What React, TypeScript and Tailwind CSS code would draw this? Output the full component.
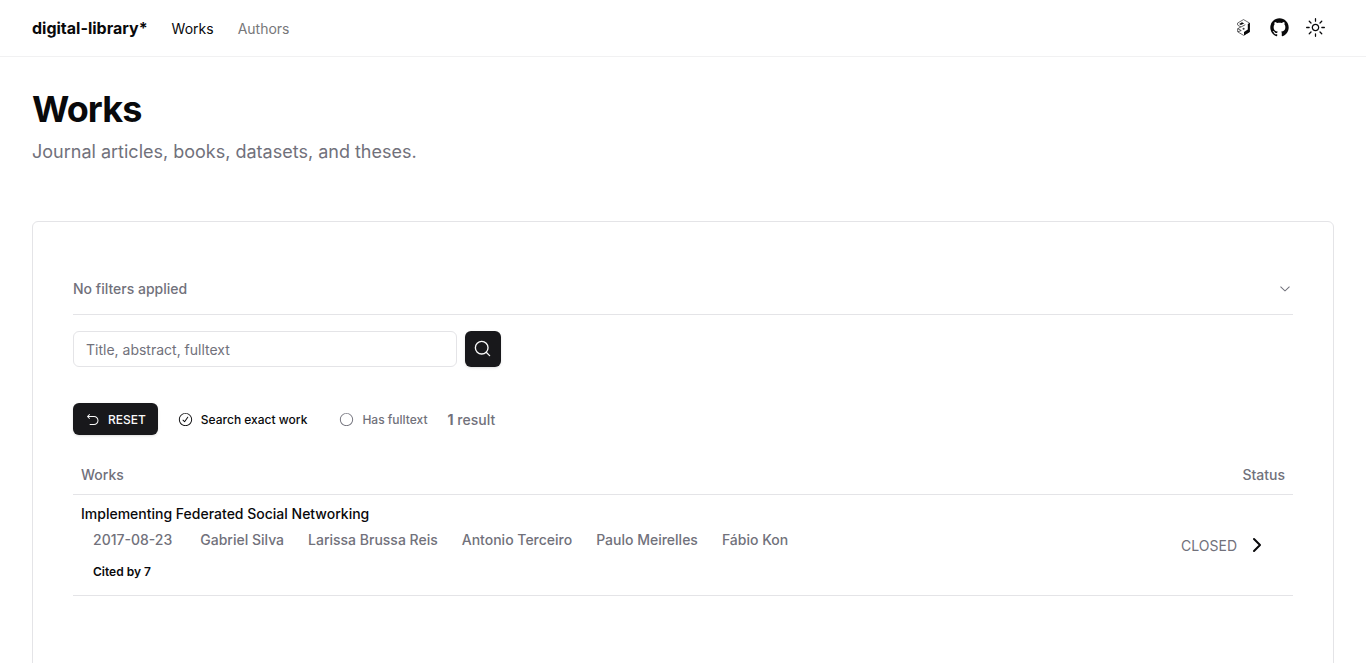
import type { ReactNode } from "react";
import {
  RxCheckCircled,
  RxChevronDown,
  RxCircle,
  RxGithubLogo,
  RxReset,
  RxSun,
} from "react-icons/rx";
import { ChevronRight, Search } from "lucide-react";

const authors = ["Gabriel Silva", "Larissa Brussa Reis", "Antonio Terceiro", "Paulo Meirelles", "Fábio Kon"];

function HexLogo() {
  return (
    <svg viewBox="0 0 13 17" className="h-[17px] w-[13px]" fill="none" stroke="currentColor">
      <path d="M.6 6V4L6.5.6l6 3.4v8.7l-6 3.6-5.9-3.5V9.6" strokeWidth="0.6" />
      <path d="m12.8 3.8-2 1.3v5.3L7 12.9v3.6l5.8-3.5Z" fill="currentColor" stroke="none" />
      <path d="M2.2 5 5 3.2l2.2 1.4-3.4 1.5Z" fill="currentColor" stroke="none" />
      <path d="M.7 6.2 4 8l4.3-2.3M3.8 8 .8 9.7l3.4 1.8M5.4 9.8h2.4M6.6 8.8v2M1 12.7l3.3-1.2" strokeWidth="0.65" />
    </svg>
  );
}

function HeaderButton({ label, children }: { label: string; children: ReactNode }) {
  return (
    <button aria-label={label} className="flex h-9 w-9 items-center justify-center">
      {children}
    </button>
  );
}

export default function App() {
  return (
    <div className="h-[663px] overflow-hidden bg-white font-['Inter',sans-serif] text-zinc-950">
      <header className="flex h-[57px] items-center border-b border-[#f1f1f2] px-8">
        <a className="mr-6 font-bold">digital-library*</a>
        <nav className="flex flex-1 gap-6 pt-0.5 text-sm">
          <a>Works</a>
          <a className="text-[#777779]">Authors</a>
        </nav>
        <div className="flex pb-px pr-[0.5px]">
          <HeaderButton label="Dataverse"><HexLogo /></HeaderButton>
          <HeaderButton label="GitHub"><RxGithubLogo className="h-[19px] w-[19px]" /></HeaderButton>
          <HeaderButton label="Theme"><RxSun className="h-[19px] w-[19px]" /></HeaderButton>
        </div>
      </header>

      <main className="px-8 pt-8">
        <h1 className="text-4xl font-bold leading-[40px] tracking-tight">Works</h1>
        <p className="mt-[9px] text-lg text-zinc-500">Journal articles, books, datasets, and theses.</p>

        <section className="mt-[55px] h-[500px] rounded-md border border-zinc-200 px-10 pt-[41px]">
          <button className="flex h-[52px] w-full items-center justify-between border-b border-zinc-200 text-sm font-medium text-zinc-500">
            No filters applied
            <RxChevronDown className="mb-px h-4 w-4" />
          </button>

          <div className="mt-4 flex gap-2">
            <input
              placeholder="Title, abstract, fulltext"
              className="h-9 w-96 rounded-md border border-zinc-200 px-3 text-sm placeholder:text-zinc-500"
            />
            <button aria-label="Search" className="flex h-9 w-9 items-center justify-center rounded-md bg-zinc-900 pb-px pr-px text-zinc-50 shadow">
              <Search className="h-[19px] w-[19px]" strokeWidth={1.7} />
            </button>
          </div>

          <div className="mt-9 flex h-8 items-center text-xs font-medium">
            <button className="flex h-8 items-center rounded-md bg-zinc-900 px-3 text-zinc-50 shadow">
              <RxReset className="mr-2 h-[15px] w-[15px]" />
              <span className="pt-px">RESET</span>
            </button>
            <button className="ml-5 flex items-center gap-2">
              <RxCheckCircled className="h-[15px] w-[15px]" />
              <span className="pt-px">Search exact work</span>
            </button>
            <button className="ml-8 flex items-center gap-2 text-zinc-500">
              <RxCircle className="h-[15px] w-[15px]" />
              <span className="pt-px">Has fulltext</span>
            </button>
            <p className="ml-5 pt-0.5 text-sm text-zinc-500"><b>1</b> result</p>
          </div>

          <div className="mt-5 flex h-10 items-center justify-between border-b border-zinc-200 px-2 text-sm font-medium text-zinc-500">
            <span>Works</span>
            <span>Status</span>
          </div>
          <div className="flex h-[101px] items-center justify-between border-b border-zinc-200 px-2 text-sm font-medium">
            <div className="pb-1.5">
              <h2 className="leading-5">Implementing Federated Social Networking</h2>
              <div className="mt-1.5 flex gap-6 px-3 text-zinc-500">
                <span className="mr-1">2017-08-23</span>
                {authors.map((name) => <span key={name}>{name}</span>)}
              </div>
              <p className="mt-3.5 px-3 text-xs font-semibold">Cited by 7</p>
            </div>
            <div className="mr-4 flex items-center gap-2">
              <span className="pt-0.5 font-normal text-zinc-500">CLOSED</span>
              <ChevronRight className="h-6 w-6" />
            </div>
          </div>
        </section>
      </main>
    </div>
  );
}
